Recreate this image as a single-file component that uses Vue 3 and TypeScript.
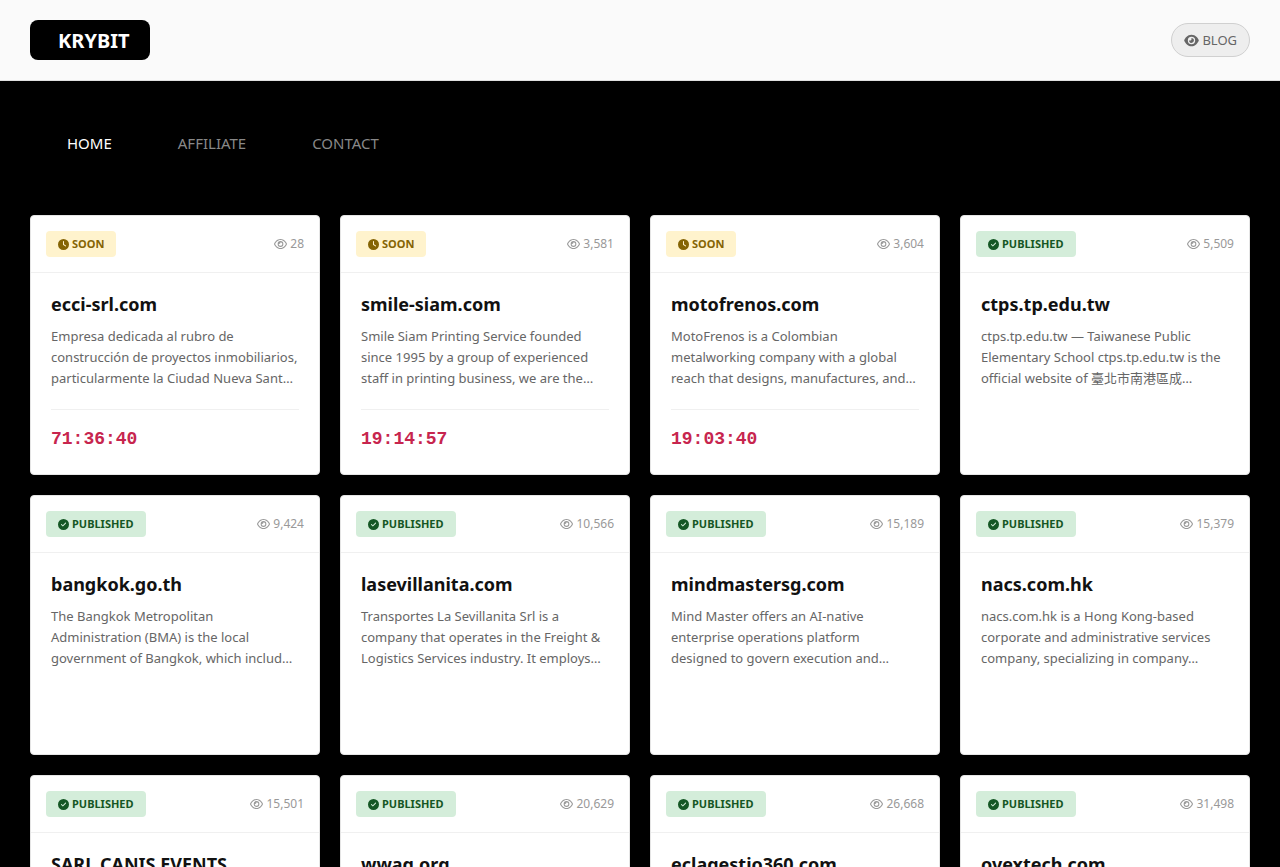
<script setup lang="ts">
interface Site {
  name: string
  views: string
  text: string
  timer?: string
}

const links: string[] = ['HOME', 'AFFILIATE', 'CONTACT']

const sites: Site[] = [
  { name: 'ecci-srl.com', views: '28', timer: '71:36:40', text: 'Empresa dedicada al rubro de construcción de proyectos inmobiliarios, particularmente la Ciudad Nueva Sant…' },
  { name: 'smile-siam.com', views: '3,581', timer: '19:14:57', text: 'Smile Siam Printing Service founded since 1995 by a group of experienced staff in printing business, we are the…' },
  { name: 'motofrenos.com', views: '3,604', timer: '19:03:40', text: 'MotoFrenos is a Colombian metalworking company with a global reach that designs, manufactures, and…' },
  { name: 'ctps.tp.edu.tw', views: '5,509', text: 'ctps.tp.edu.tw — Taiwanese Public Elementary School ctps.tp.edu.tw is the official website of 臺北市南港區成…' },
  { name: 'bangkok.go.th', views: '9,424', text: 'The Bangkok Metropolitan Administration (BMA) is the local government of Bangkok, which includ…' },
  { name: 'lasevillanita.com', views: '10,566', text: 'Transportes La Sevillanita Srl is a company that operates in the Freight & Logistics Services industry. It employs…' },
  { name: 'mindmastersg.com', views: '15,189', text: 'Mind Master offers an AI-native enterprise operations platform designed to govern execution and…' },
  { name: 'nacs.com.hk', views: '15,379', text: 'nacs.com.hk is a Hong Kong-based corporate and administrative services company, specializing in company…' },
  { name: 'SARL CANIS EVENTS', views: '15,501', text: '' },
  { name: 'wwag.org', views: '20,629', text: '' },
  { name: 'eclagestio360.com', views: '26,668', text: '' },
  { name: 'ovextech.com', views: '31,498', text: '' },
]

const clockPath = 'M256 0a256 256 0 1 1 0 512A256 256 0 1 1 256 0zM232 120V256c0 8 4 15.5 10.7 20l96 64c11 7.4 25.9 4.4 33.3-6.7s4.4-25.9-6.7-33.3L280 243.2V120c0-13.3-10.7-24-24-24s-24 10.7-24 24z'
const checkPath = 'M256 512A256 256 0 1 0 256 0a256 256 0 1 0 0 512zM369 209L241 337c-9.4 9.4-24.6 9.4-33.9 0l-64-64c-9.4-9.4-9.4-24.6 0-33.9s24.6-9.4 33.9 0l47 47L335 175c9.4-9.4 24.6-9.4 33.9 0s9.4 24.6 0 33.9z'
</script>

<template>
  <div class="page">
    <header class="topbar">
      <a class="logo" href="#">KRYBIT</a>
      <a class="blog" href="#blog">
        <svg class="blog-icon" viewBox="0 0 576 512" aria-hidden="true">
          <path d="M288 32c-80.8 0-145.5 36.8-192.6 80.6C48.6 156 17.3 208 2.5 243.7c-3.3 7.9-3.3 16.7 0 24.6C17.3 304 48.6 356 95.4 399.4C142.5 443.2 207.2 480 288 480s145.5-36.8 192.6-80.6c46.8-43.5 78.1-95.4 93-131.1c3.3-7.9 3.3-16.7 0-24.6c-14.9-35.7-46.2-87.7-93-131.1C433.5 68.8 368.8 32 288 32zM144 256a144 144 0 1 1 288 0 144 144 0 1 1 -288 0zm144-64c0 35.3-28.7 64-64 64c-7.1 0-13.9-1.2-20.3-3.3c-5.5-1.8-11.9 1.6-11.7 7.4c.3 6.9 1.3 13.8 3.2 20.7c13.7 51.2 66.4 81.6 117.6 67.9s81.6-66.4 67.9-117.6c-11.1-41.5-47.8-69.4-88.6-71.1c-5.8-.2-9.2 6.1-7.4 11.7c2.1 6.4 3.3 13.2 3.3 20.3z" />
        </svg>
        <span>BLOG</span>
      </a>
    </header>

    <nav class="menu" aria-label="Main">
      <a v-for="(link, i) in links" :key="link" :class="['menu-link', { active: i === 0 }]" :href="'#' + link.toLowerCase()">{{ link }}</a>
    </nav>

    <main class="grid">
      <article v-for="site in sites" :key="site.name" class="card">
        <div class="card-head">
          <span :class="['badge', site.timer ? 'soon' : 'published']">
            <svg class="badge-icon" viewBox="0 0 512 512" aria-hidden="true">
              <path :d="site.timer ? clockPath : checkPath" />
            </svg>
            <span>{{ site.timer ? 'SOON' : 'PUBLISHED' }}</span>
          </span>
          <span class="views">
            <svg class="views-icon" viewBox="0 0 576 512" aria-hidden="true">
              <path d="M288 80c-65.2 0-118.8 29.6-159.9 67.7C89.6 183.5 63 226 49.4 256c13.6 30 40.2 72.5 78.6 108.3C169.2 402.4 222.8 432 288 432s118.8-29.6 159.9-67.7C486.4 328.5 513 286 526.6 256c-13.6-30-40.2-72.5-78.6-108.3C406.8 109.6 353.2 80 288 80zM95.4 112.6C142.5 68.8 207.2 32 288 32s145.5 36.8 192.6 80.6c46.8 43.5 78.1 95.4 93 131.1c3.3 7.9 3.3 16.7 0 24.6c-14.9 35.7-46.2 87.7-93 131.1C433.5 443.2 368.8 480 288 480s-145.5-36.8-192.6-80.6C48.6 356 17.3 304 2.5 268.3c-3.3-7.9-3.3-16.7 0-24.6C17.3 208 48.6 156 95.4 112.6zM288 336c44.2 0 80-35.8 80-80s-35.8-80-80-80c-.7 0-1.3 0-2 0c1.3 5.1 2 10.5 2 16c0 35.3-28.7 64-64 64c-5.5 0-10.9-.7-16-2c0 .7 0 1.3 0 2c0 44.2 35.8 80 80 80zm0-208a128 128 0 1 1 0 256 128 128 0 1 1 0-256z" />
            </svg>
            <span>{{ site.views }}</span>
          </span>
        </div>
        <div class="card-body">
          <h2 class="title">{{ site.name }}</h2>
          <p v-if="site.text" class="text">{{ site.text }}</p>
          <div v-if="site.timer" class="timer">{{ site.timer }}</div>
        </div>
      </article>
    </main>
  </div>
</template>

<style>
body {
  background: #000;
}
</style>

<style scoped>
.page {
  min-height: 100vh;
  background: #000;
  font-family: "Noto Sans", "Noto Sans CJK TC", sans-serif;
}
a {
  text-decoration: none;
}
svg {
  fill: currentColor;
  flex: none;
}
.topbar {
  display: flex;
  align-items: center;
  justify-content: space-between;
  padding: 20px 30px;
  background: #fafafa;
  border-bottom: 1px solid #e0e0e0;
}
.logo {
  padding: 2px 20px 0 28px;
  border-radius: 8px;
  background: #000;
  color: #fff;
  font-size: 20px;
  font-weight: 700;
  line-height: 38px;
}
.blog {
  display: flex;
  align-items: center;
  gap: 3px;
  padding: 6px 12px;
  border: 1px solid #d0d0d0;
  border-radius: 20px;
  background: #eee;
  color: #666;
  font-size: 13px;
  line-height: 20px;
}
.blog-icon {
  width: 15px;
  height: 13px;
}
.menu {
  display: flex;
  gap: 16px;
  padding: 39px 42px 49px;
}
.menu-link {
  padding: 12px 25px;
  color: #888;
  font-size: 15px;
  line-height: 22px;
}
.menu-link.active {
  color: #fff;
}
.grid {
  display: grid;
  grid-template-columns: repeat(4, minmax(0, 1fr));
  gap: 20px;
  padding: 0 30px 30px;
}
.card {
  min-height: 260px;
  box-sizing: border-box;
  border: 1px solid #e5e5e5;
  border-radius: 4px;
  background: #fff;
}
.card-head {
  display: flex;
  align-items: center;
  justify-content: space-between;
  padding: 15px;
  border-bottom: 1px solid #f0f0f0;
}
.badge {
  display: flex;
  align-items: center;
  gap: 3px;
  padding: 5px 12px;
  border-radius: 4px;
  font-size: 11px;
  font-weight: 700;
  line-height: 16px;
}
.badge-icon {
  width: 11px;
  height: 11px;
}
.soon {
  background: #fff3cd;
  color: #856404;
}
.published {
  background: #d4edda;
  color: #155724;
}
.views {
  display: flex;
  align-items: center;
  gap: 3px;
  color: #999;
  font-size: 12px;
  line-height: 20px;
}
.views-icon {
  width: 13px;
  height: 12px;
}
.card-body {
  padding: 20px;
}
.title {
  margin: 0 0 11px;
  color: #111;
  font-size: 18px;
  font-weight: 700;
  line-height: 22px;
}
.text {
  margin: 0;
  color: #666;
  font-size: 13px;
  line-height: 21px;
}
.timer {
  margin-top: 20px;
  padding-top: 18px;
  border-top: 1px solid #f0f0f0;
  color: #c7254e;
  font-family: "Liberation Mono", monospace;
  font-size: 18px;
  font-weight: 700;
  line-height: 22px;
}
</style>
